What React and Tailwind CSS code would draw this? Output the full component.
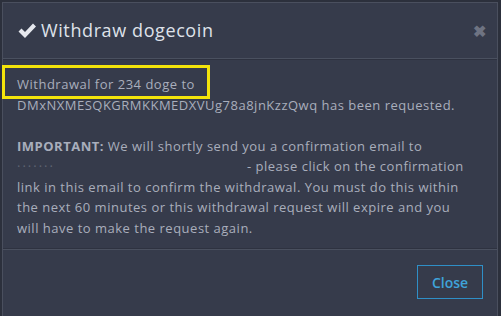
export default function App() {
    return (
        <div className="w-[501px] h-[316px] bg-[#2c303c] overflow-hidden font-['Open_Sans',sans-serif]">
            <div className="mt-[2px] ml-[2px] w-[496px] h-[316px] bg-[#363b4b] border-l border-t border-r border-[#4a4f5e] flex flex-col">
                <div className="h-[56px] flex items-center px-[14px] border-b border-[#4a505f] shadow-[0_1px_0_#2e3240]">
                    <svg width="20" height="18" viewBox="0 0 20 18" className="shrink-0">
                        <path d="M1.5 9.5 L4.5 6.5 L8 10 L16 1.5 L19 4.5 L8 16 Z" fill="#e6e8ee" />
                    </svg>
                    <h1 className="ml-[4px] text-[18px] text-[#dfe2ea] tracking-[0.6px]">Withdraw dogecoin</h1>
                    <span className="ml-auto mr-[-3px] text-[16px] font-bold text-[#6e7382]">✖</span>
                </div>
                <div className="relative px-[14px] pt-[15px] text-[13px] leading-[20.5px] text-[#a9aebc] tracking-[0.5px] h-[190px]">
                    <div className="absolute left-[-1px] top-[6px] w-[208px] h-[34px] border-[3px] border-[#f4e40b]" />
                    <p>Withdrawal for 234 doge to</p>
                    <p>DMxNXMESQKGRMKKMEDXVUg78a8jnKzzQwq has been requested.</p>
                    <p className="mt-[20.5px]">
                        <span className="font-bold">IMPORTANT:</span> We will shortly send you a confirmation email to
                    </p>
                    <p className="flex">
                        <span className="w-[230px] inline-block text-[#5f6472] tracking-[2px]">·······</span>
                        <span>- please click on the confirmation</span>
                    </p>
                    <p>link in this email to confirm the withdrawal. You must do this within</p>
                    <p>the next 60 minutes or this withdrawal request will expire and you</p>
                    <p>will have to make the request again.</p>
                </div>
                <div className="border-t border-[#4a505f] shadow-[0_-1px_0_#2e3240] flex justify-end px-[14px] pt-[15px]">
                    <button className="w-[66px] h-[34px] border border-[#2f8fc7] text-[#3fa3da] text-[14px] font-semibold">Close</button>
                </div>
            </div>
        </div>
    );
}
